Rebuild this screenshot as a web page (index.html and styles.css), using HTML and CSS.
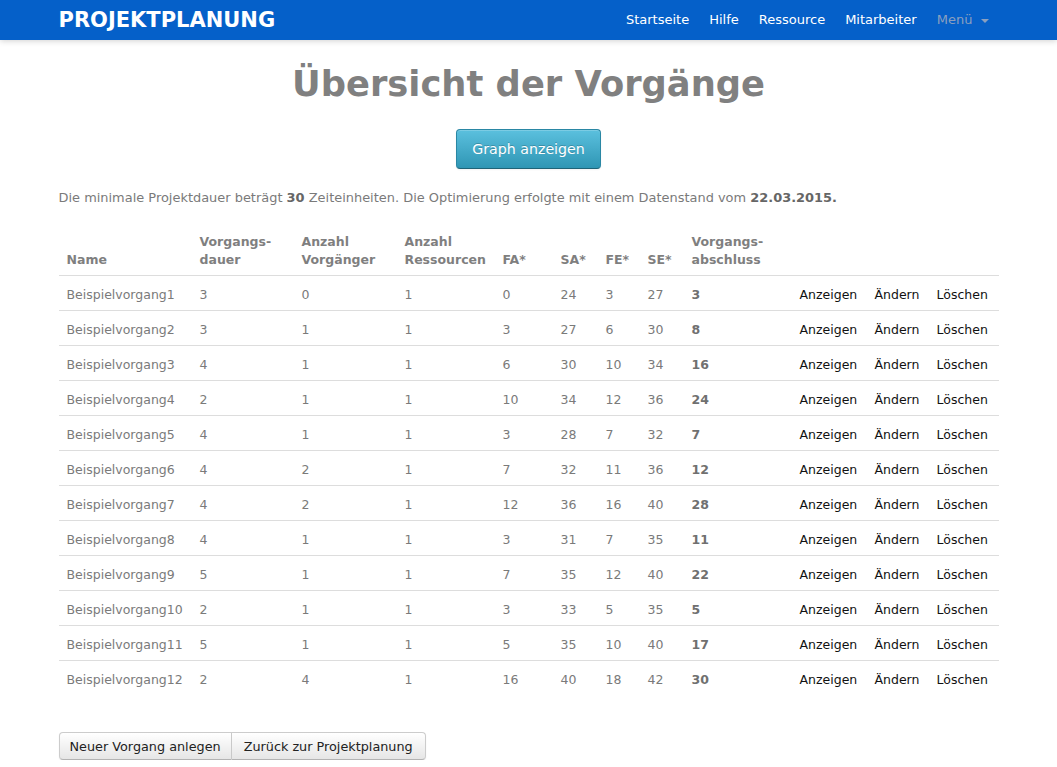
FILE: index.html
```html
<!DOCTYPE html>
<html lang="de">
<head>
<meta charset="utf-8">
<title>Projektplanung – Übersicht der Vorgänge</title>
<link rel="stylesheet" href="styles.css">
</head>
<body>
<header class="navbar">
  <div class="container nav-inner">
    <a class="brand" href="#">PROJEKTPLANUNG</a>
    <ul class="nav">
      <li><a href="#">Startseite</a></li>
      <li><a href="#">Hilfe</a></li>
      <li><a href="#">Ressource</a></li>
      <li><a href="#">Mitarbeiter</a></li>
      <li><a class="dropdown" href="#">Menü <span class="caret"></span></a></li>
    </ul>
  </div>
</header>
<main class="container">
  <h1>Übersicht der Vorgänge</h1>
  <div class="center"><a class="btn-info" href="#">Graph anzeigen</a></div>
  <p class="summary">Die minimale Projektdauer beträgt <b>30</b> Zeiteinheiten. Die Optimierung erfolgte mit einem Datenstand vom <b>22.03.2015.</b></p>
  <table class="table">
    <colgroup>
      <col class="c-name"><col class="c-dauer"><col class="c-vorg"><col class="c-res">
      <col class="c-fa"><col class="c-sa"><col class="c-fe"><col class="c-se">
      <col class="c-abs"><col class="c-a1"><col class="c-a2"><col class="c-a3">
    </colgroup>
    <thead>
      <tr>
        <th>Name</th><th>Vorgangs-<br>dauer</th><th>Anzahl<br>Vorgänger</th><th>Anzahl<br>Ressourcen</th>
        <th>FA*</th><th>SA*</th><th>FE*</th><th>SE*</th><th>Vorgangs-<br>abschluss</th><th></th><th></th><th></th>
      </tr>
    </thead>
    <tbody>
      <tr><td>Beispielvorgang1</td><td>3</td><td>0</td><td>1</td><td>0</td><td>24</td><td>3</td><td>27</td><td><b>3</b></td><td class="act">Anzeigen</td><td class="act">Ändern</td><td class="act">Löschen</td></tr>
      <tr><td>Beispielvorgang2</td><td>3</td><td>1</td><td>1</td><td>3</td><td>27</td><td>6</td><td>30</td><td><b>8</b></td><td class="act">Anzeigen</td><td class="act">Ändern</td><td class="act">Löschen</td></tr>
      <tr><td>Beispielvorgang3</td><td>4</td><td>1</td><td>1</td><td>6</td><td>30</td><td>10</td><td>34</td><td><b>16</b></td><td class="act">Anzeigen</td><td class="act">Ändern</td><td class="act">Löschen</td></tr>
      <tr><td>Beispielvorgang4</td><td>2</td><td>1</td><td>1</td><td>10</td><td>34</td><td>12</td><td>36</td><td><b>24</b></td><td class="act">Anzeigen</td><td class="act">Ändern</td><td class="act">Löschen</td></tr>
      <tr><td>Beispielvorgang5</td><td>4</td><td>1</td><td>1</td><td>3</td><td>28</td><td>7</td><td>32</td><td><b>7</b></td><td class="act">Anzeigen</td><td class="act">Ändern</td><td class="act">Löschen</td></tr>
      <tr><td>Beispielvorgang6</td><td>4</td><td>2</td><td>1</td><td>7</td><td>32</td><td>11</td><td>36</td><td><b>12</b></td><td class="act">Anzeigen</td><td class="act">Ändern</td><td class="act">Löschen</td></tr>
      <tr><td>Beispielvorgang7</td><td>4</td><td>2</td><td>1</td><td>12</td><td>36</td><td>16</td><td>40</td><td><b>28</b></td><td class="act">Anzeigen</td><td class="act">Ändern</td><td class="act">Löschen</td></tr>
      <tr><td>Beispielvorgang8</td><td>4</td><td>1</td><td>1</td><td>3</td><td>31</td><td>7</td><td>35</td><td><b>11</b></td><td class="act">Anzeigen</td><td class="act">Ändern</td><td class="act">Löschen</td></tr>
      <tr><td>Beispielvorgang9</td><td>5</td><td>1</td><td>1</td><td>7</td><td>35</td><td>12</td><td>40</td><td><b>22</b></td><td class="act">Anzeigen</td><td class="act">Ändern</td><td class="act">Löschen</td></tr>
      <tr><td>Beispielvorgang10</td><td>2</td><td>1</td><td>1</td><td>3</td><td>33</td><td>5</td><td>35</td><td><b>5</b></td><td class="act">Anzeigen</td><td class="act">Ändern</td><td class="act">Löschen</td></tr>
      <tr><td>Beispielvorgang11</td><td>5</td><td>1</td><td>1</td><td>5</td><td>35</td><td>10</td><td>40</td><td><b>17</b></td><td class="act">Anzeigen</td><td class="act">Ändern</td><td class="act">Löschen</td></tr>
      <tr><td>Beispielvorgang12</td><td>2</td><td>4</td><td>1</td><td>16</td><td>40</td><td>18</td><td>42</td><td><b>30</b></td><td class="act">Anzeigen</td><td class="act">Ändern</td><td class="act">Löschen</td></tr>
    </tbody>
  </table>
  <div class="btn-group">
    <a class="btn" href="#">Neuer Vorgang anlegen</a><a class="btn" href="#">Zurück zur Projektplanung</a>
  </div>
</main>
</body>
</html>
```
FILE: styles.css
```css
* { box-sizing: border-box; }
html, body { margin: 0; padding: 0; }
body {
  font-family: "DejaVu Sans", Verdana, sans-serif;
  font-size: 12.5px;
  line-height: 20px;
  color: #7a7a7a;
  background: #fff;
}
a { text-decoration: none; }
.container { width: 940px; margin: 0 auto; }

.navbar {
  height: 40px;
  background: #0560c9;
  box-shadow: 0 1px 6px rgba(0,0,0,0.18);
}
.nav-inner {
  display: flex;
  align-items: center;
  justify-content: space-between;
  height: 40px;
}
.brand {
  color: #fff;
  font-weight: bold;
  font-size: 21px;
  line-height: 40px;
}
.nav {
  display: flex;
  list-style: none;
  margin: 0;
  padding: 0;
}
.nav a {
  display: block;
  padding: 0 10px;
  line-height: 38px;
  color: #fff;
  font-size: 13px;
}
.nav a.dropdown { color: #8a9fbf; }
.caret {
  display: inline-block;
  width: 0; height: 0;
  margin-left: 4px;
  vertical-align: middle;
  border-top: 4px solid #8a9fbf;
  border-left: 4px solid transparent;
  border-right: 4px solid transparent;
}

h1 {
  margin: 22px 0 0;
  text-align: center;
  font-size: 35.3px;
  line-height: 44px;
  color: #808080;
  font-weight: bold;
}
.center { text-align: center; margin-top: 23px; }
.btn-info {
  display: inline-block;
  height: 40px;
  padding: 0 15px;
  font-size: 14.2px;
  line-height: 38px;
  color: #fff;
  text-shadow: 0 -1px 0 rgba(0,0,0,0.2);
  background: linear-gradient(#5bc0de, #2f96b4);
  border: 1px solid #2a87a4;
  border-bottom-color: #1f6377;
  border-radius: 4px;
  box-shadow: inset 0 1px 0 rgba(255,255,255,0.2), 0 1px 2px rgba(0,0,0,0.05);
}
.summary { margin: 19px 0 16px; font-size: 12.95px; }
.summary b { color: #666; }

.table {
  width: 940px;
  border-collapse: collapse;
  table-layout: fixed;
}
.c-name { width: 133px; }
.c-dauer { width: 102px; }
.c-vorg { width: 103px; }
.c-res { width: 98px; }
.c-fa { width: 58px; }
.c-sa { width: 45px; }
.c-fe { width: 42px; }
.c-se { width: 44px; }
.c-abs { width: 108px; }
.c-a1 { width: 75px; }
.c-a2 { width: 62px; }
.c-a3 { width: 70px; }
.table th, .table td {
  padding: 10px 8px 6px;
  line-height: 18px;
  text-align: left;
  white-space: nowrap;
}
.table th {
  vertical-align: bottom;
  font-weight: bold;
  color: #7f7f7f;
  padding: 9px 8px 6px;
}
.table thead tr { border-bottom: 1px solid #dddddd; }
.table tbody tr + tr { border-top: 1px solid #dddddd; }
.table td b { color: #707070; }
.table td.act { color: #111; }

.btn-group {
  display: flex;
  margin-top: 37px;
}
.btn {
  display: inline-block;
  height: 28px;
  padding: 0 10px;
  line-height: 27px;
  font-size: 12.8px;
  color: #222;
  background: linear-gradient(#ffffff, #e6e6e6);
  border: 1px solid #cccccc;
  border-bottom-color: #b3b3b3;
  box-shadow: inset 0 1px 0 rgba(255,255,255,0.2), 0 1px 2px rgba(0,0,0,0.05);
}
.btn:first-child { border-radius: 4px 0 0 4px; }
.btn:last-child { border-radius: 0 4px 4px 0; border-left: none; padding: 0 12px; }
```
